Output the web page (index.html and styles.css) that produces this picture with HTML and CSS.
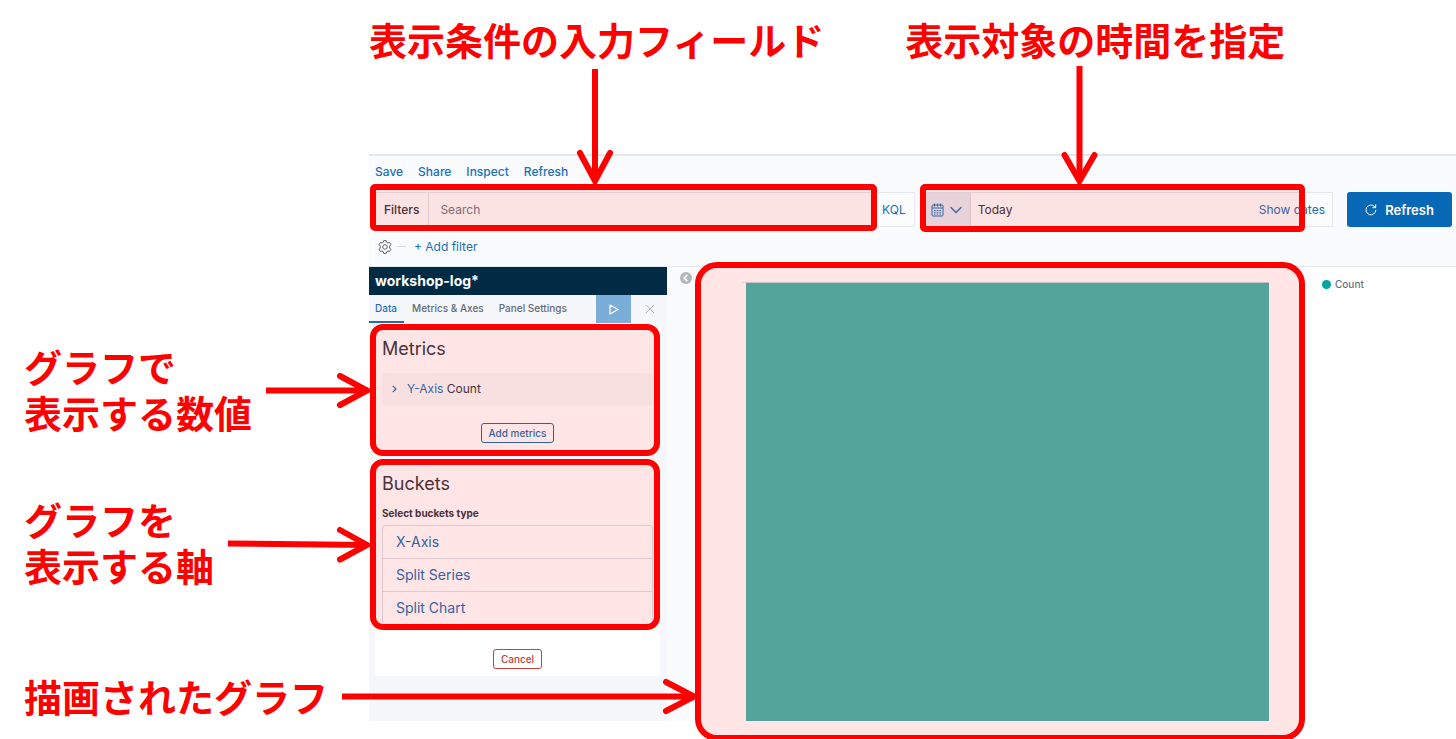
FILE: index.html
```html
<!DOCTYPE html>
<html lang="ja">
<head>
<meta charset="utf-8">
<title>workshop-log* - Visualize</title>
<link rel="stylesheet" href="styles.css">
</head>
<body>
<div class="page">
  <header class="captions">
    <p class="note">表示条件の入力フィールド</p>
    <p class="note">表示対象の時間を指定</p>
  </header>
  <div class="body">
    <aside class="side-notes">
      <p class="note note-metrics"><span>グラフで</span><span>表示する数値</span></p>
      <p class="note note-buckets"><span>グラフを</span><span>表示する軸</span></p>
      <p class="note">描画されたグラフ</p>
    </aside>
    <main class="app">
      <div class="topbar">
        <nav class="menu">
          <a href="#save">Save</a>
          <a href="#share">Share</a>
          <a href="#inspect">Inspect</a>
          <a href="#refresh">Refresh</a>
        </nav>
        <div class="query">
          <div class="field search">
            <label class="search-label" for="q">Filters</label>
            <input class="search-input" id="q" type="text" placeholder="Search">
            <button class="kql" type="button">KQL</button>
            <span class="mark mark-search"></span>
          </div>
          <div class="field dates">
            <button class="quick" type="button" aria-label="Quick select">
              <svg width="13" height="14" viewBox="0 0 13 14" fill="none" stroke="currentColor"><rect x="1" y="2" width="11" height="11" rx="1"/><path d="M1 5h11M3.500 .5v3M6.500 .5v3M9.500 .5v3"/><path d="M3 7.500h1.500M5.700 7.500h1.600M8.500 7.500H10M3 9.300h1.500M5.700 9.300h1.600M8.500 9.300H10M3 11h1.500M5.700 11h1.600M8.500 11H10"/></svg>
              <svg width="12" height="8" viewBox="0 0 12 8" fill="none" stroke="currentColor" stroke-width="1.300" stroke-linecap="round"><path d="M1 1.500l5 5 5-5"/></svg>
            </button>
            <button class="range" type="button">Today</button>
            <button class="show" type="button">Show dates</button>
            <span class="mark mark-dates"></span>
          </div>
          <button class="refresh" type="button">
            <svg width="12" height="12" viewBox="0 0 12 12" fill="none" stroke="currentColor" stroke-linecap="round"><path d="M10.800 6.500A4.900 4.900 0 1 1 9.300 2.400L10.500 3.500M10.700 .8v2.900H7.800"/></svg>
            Refresh
          </button>
        </div>
        <div class="filters">
          <button class="gear" type="button" aria-label="Filter options">
            <svg width="14" height="14" viewBox="0 0 14 14" fill="none" stroke="currentColor"><path d="M5.700 .6h2.600l.4 1.700 1.200.7 1.700-.5 1.300 2.200L11.700 6v2l1.200 1.300-1.300 2.200-1.700-.5-1.200.7-.4 1.700H5.700l-.4-1.700-1.200-.7-1.700.5L1.100 9.300 2.300 8V6L1.100 4.700l1.300-2.200 1.700.5 1.200-.7z" stroke-linejoin="round"/><circle cx="7" cy="7" r="2.300"/></svg>
          </button>
          <span class="dash"></span>
          <button class="add-filter" type="button">+ Add filter</button>
        </div>
      </div>
      <div class="workspace">
        <section class="panel">
          <h1 class="index">workshop-log*</h1>
          <div class="tabs">
            <button class="tab tab-on" type="button">Data</button>
            <button class="tab" type="button">Metrics &amp; Axes</button>
            <button class="tab" type="button">Panel Settings</button>
            <button class="apply" type="button" aria-label="Apply changes"><svg width="10" height="11" viewBox="0 0 10 11" fill="none" stroke="currentColor" stroke-width="1.200" stroke-linejoin="round"><path d="M1 1l8 4.500L1 10z"/></svg></button>
            <button class="discard" type="button" aria-label="Discard changes"><svg width="10" height="10" viewBox="0 0 10 10" fill="none" stroke="currentColor"><path d="M.8 .8l8.400 8.400M9.200 .8L.8 9.200"/></svg></button>
          </div>
          <div class="cards">
            <section class="card">
              <h2 class="title">Metrics</h2>
              <button class="metric" type="button">
                <svg width="5" height="8" viewBox="0 0 5 8" fill="none" stroke="currentColor" stroke-width="1.200"><path d="M.8 .8L4 4 .8 7.200"/></svg>
                <span><span class="axis">Y-Axis</span> Count</span>
              </button>
              <button class="small" type="button">Add metrics</button>
              <span class="mark mark-card"></span>
            </section>
            <section class="card">
              <h2 class="title">Buckets</h2>
              <h3 class="subtitle">Select buckets type</h3>
              <ul class="types">
                <li><button class="type" type="button">X-Axis</button></li>
                <li><button class="type" type="button">Split Series</button></li>
                <li><button class="type" type="button">Split Chart</button></li>
              </ul>
              <button class="small danger" type="button">Cancel</button>
              <span class="mark mark-card mark-buckets"></span>
            </section>
          </div>
        </section>
        <div class="gutter">
          <button class="collapse" type="button" aria-label="Collapse panel"><svg width="12" height="12" viewBox="0 0 12 12"><circle cx="6" cy="6" r="6" fill="#b5b6b9"/><path d="M7.300 2.800L4.200 6l3.100 3.200" fill="none" stroke="#fff" stroke-width="1.700"/></svg></button>
        </div>
        <section class="vis">
          <div class="chart">
            <div class="tick"></div>
            <div class="bar"></div>
            <span class="mark mark-chart"></span>
          </div>
          <p class="legend"><span class="dot"></span>Count</p>
        </section>
      </div>
    </main>
  </div>
  <svg class="arrows" aria-hidden="true">
    <path d="M595 69V180M1079.500 66V180M266 390.500H368M228 543.500L368 545M342 696.500H693"/>
    <path class="head" d="M580 153l15 28 15-28M1064.500 155l15 26 15-26M340 376l27 14.500L340 405M340 530l27 15-27 14.500M666 682l28 14.500L666 711"/>
  </svg>
</div>
</body>
</html>
```
FILE: styles.css
```css
* { box-sizing: border-box; }
html, body { height: 100%; overflow: hidden; }
body, p, h1, h2, h3, ul { margin: 0; padding: 0; }
body {
  background: #fff;
  color: #343741;
  font: 12px/16px Inter, "Noto Sans CJK JP", sans-serif;
}
button, input {
  margin: 0;
  padding: 0;
  border: 0;
  background: none;
  color: inherit;
  font: inherit;
}
a { color: inherit; text-decoration: none; }
svg { display: block; flex: none; }

.page { position: relative; min-height: 100%; }
.note {
  color: #f00;
  font: 700 38px/46px "Noto Sans CJK JP", sans-serif;
  white-space: nowrap;
}
.note span { display: block; }
.captions {
  display: flex;
  gap: 81px;
  padding: 16px 0 92px 369px;
}
.body { display: grid; grid-template-columns: 369px minmax(0, 1fr); }
.side-notes { padding: 189px 0 0 24px; }
.note-metrics { margin-bottom: 61px; }
.note-buckets { margin-bottom: 85px; }

.arrows {
  position: absolute;
  top: 0;
  left: 0;
  width: 100%;
  height: 100%;
  pointer-events: none;
  fill: none;
  stroke: #f00;
  stroke-width: 6px;
}
.head { stroke-linecap: round; }
.mark {
  position: absolute;
  border: 6px solid #f00;
  border-radius: 5px;
  background: rgba(255, 0, 0, 0.1);
  background-clip: padding-box;
  pointer-events: none;
}

.app { display: flex; flex-direction: column; }
.topbar {
  padding: 0 4px 0 6px;
  border-top: 2px solid #e4e7ed;
  border-bottom: 1px solid #e4e7ed;
  background: #fafbfd;
}
.menu {
  display: flex;
  gap: 15px;
  padding: 8px 0 12px;
  color: #1a6fb5;
  font-weight: 500;
}
.query { display: flex; }
.field {
  position: relative;
  display: flex;
  height: 35px;
  border: 1px solid #e4e7ec;
  background: #fbfcfd;
}
.search { flex: 540 1 0; margin-right: 11px; }
.search-label {
  padding: 9px 9px 8px 8px;
  border-right: 1px solid #dfe2e8;
  font-weight: 500;
}
.search-input { flex: 1; min-width: 0; padding: 0 11px; outline: 0; }
.search-input::placeholder { color: #72767f; opacity: 1; }
.kql { padding: 0 8px; color: #1a6fb5; }
.mark-search { inset: -9px 37px -5px -6px; }
.dates { flex: 407 1 0; margin-right: 14px; }
.quick {
  display: flex;
  align-items: center;
  gap: 6px;
  padding: 0 8px 0 4px;
  border-right: 1px solid #d8dbe4;
  background: #e6eaf2;
  color: #1a6fb5;
}
.range { flex: 1; padding: 0 7px; text-align: left; }
.show { padding: 0 7px; color: #1a6fb5; }
.mark-dates { inset: -9px 27px -6px -7px; }
.refresh {
  display: flex;
  align-items: center;
  justify-content: center;
  gap: 8px;
  width: 105px;
  border-radius: 3px;
  background: #0769b5;
  color: #fff;
  font-size: 13px;
  font-weight: 600;
}
.filters {
  display: flex;
  align-items: center;
  gap: 5px;
  height: 39px;
  padding-left: 3px;
}
.gear { color: #5f6570; }
.dash { width: 9px; height: 1px; background: #d3dae6; }
.add-filter { padding-left: 3px; color: #1a6fb5; }

.workspace { display: flex; flex: 1; }
.panel { width: 298px; background: #f5f7fb; }
.index {
  padding: 6px;
  background: #012b45;
  color: #fff;
  font-size: 14px;
  font-weight: 700;
  line-height: 16px;
}
.tabs { display: flex; gap: 2px; height: 28px; color: #646a76; font-size: 10px; font-weight: 500; }
.tab { padding: 0 7px 0 6px; border-bottom: 2px solid transparent; white-space: nowrap; }
.tab-on { border-color: #1a6fb5; color: #1a6fb5; }
.apply {
  display: flex;
  align-items: center;
  justify-content: center;
  width: 35px;
  margin-left: auto;
  background: #7aadd8;
  color: #fff;
}
.discard {
  display: flex;
  align-items: center;
  justify-content: center;
  width: 34px;
  color: #adb0b6;
}
.cards {
  display: flex;
  flex-direction: column;
  gap: 10px;
  padding: 4px 7px 45px 6px;
}
.card {
  position: relative;
  display: flex;
  flex-direction: column;
  padding: 10px 7px 7px;
  border-radius: 4px;
  background: #fff;
}
.title { font-size: 18px; font-weight: 400; line-height: 24px; }
.metric {
  display: flex;
  align-items: center;
  gap: 10px;
  height: 32px;
  margin: 12px 0 18px;
  padding-left: 10px;
  border-radius: 3px;
  background: #f8fafa;
}
.metric svg, .axis { color: #1a6fb5; }
.small {
  align-self: center;
  height: 20px;
  margin-bottom: 2px;
  padding: 0 7px;
  border: 1px solid #1a6fb5;
  border-radius: 3px;
  color: #1a6fb5;
  font-size: 10px;
  font-weight: 500;
  line-height: 16px;
}
.danger { margin-bottom: 0; border-color: #c8403a; color: #c8403a; }
.mark-card { inset: -3px 0 -4px -5px; border-radius: 13px; }
.mark-buckets { bottom: 46px; }
.subtitle { margin: 9px 0 4px; font-size: 10px; font-weight: 700; }
.types {
  border: 1px solid #dcdfe9;
  border-radius: 3px;
  list-style: none;
  color: #1a6fb5;
  font-size: 14px;
}
.types li + li { border-top: 1px solid #dcdfe9; }
.type { width: 100%; height: 32px; padding: 0 13px; text-align: left; }
.types + .small { margin-top: 24px; }

.gutter { width: 28px; padding: 5px 0 0 13px; background: #fafbfd; }
.vis { display: flex; flex: 1; }
.chart { position: relative; flex: 1; display: flex; padding: 15px 36px 0 47px; }
.tick { width: 4px; height: 1px; background: #e4e7ed; }
.bar { flex: 1; border: 1px solid #c4d9d9; border-width: 1px 0 0; background: #41b7ae; }
.mark-chart { inset: -5px 0 -20px; border-radius: 22px; }
.legend {
  display: flex;
  gap: 4px;
  width: 151px;
  padding: 9px 0 0 17px;
  color: #69707d;
  font-size: 10px;
  font-weight: 500;
}
.dot { width: 9px; height: 9px; margin-top: 4px; border-radius: 50%; background: #00a69b; }
```
